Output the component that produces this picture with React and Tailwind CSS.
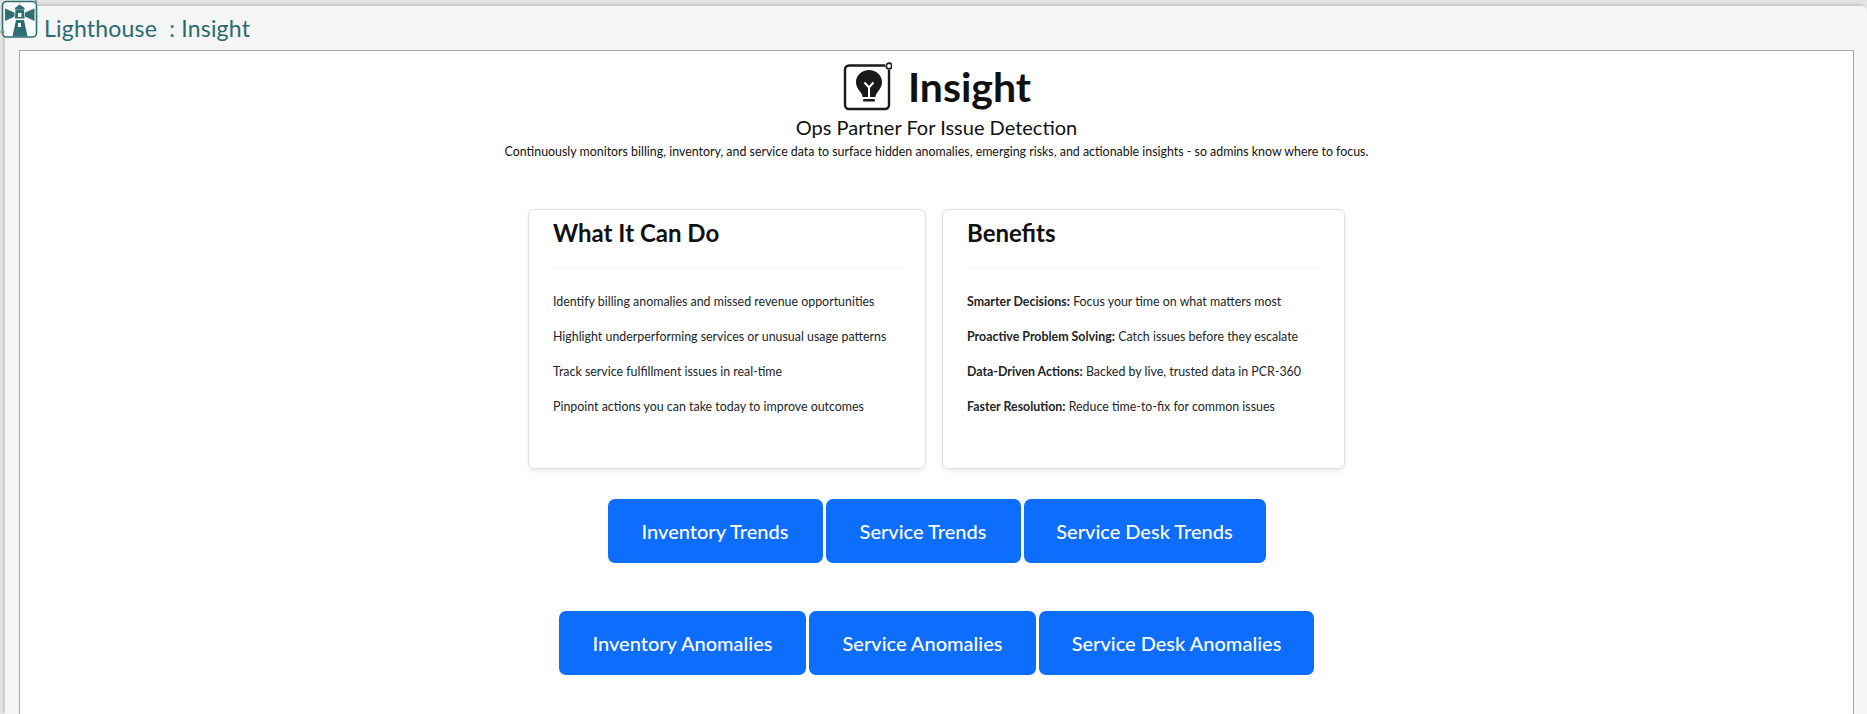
const rows = [
  'Identify billing anomalies and missed revenue opportunities',
  'Highlight underperforming services or unusual usage patterns',
  'Track service fulfillment issues in real-time',
  'Pinpoint actions you can take today to improve outcomes',
];

const benefits = [
  ['Smarter Decisions:', 'Focus your time on what matters most'],
  ['Proactive Problem Solving:', 'Catch issues before they escalate'],
  ['Data-Driven Actions:', 'Backed by live, trusted data in PCR-360'],
  ['Faster Resolution:', 'Reduce time-to-fix for common issues'],
];

function LighthouseLogo() {
  return (
    <div className="absolute left-[-5px] top-[-6px] h-[40px] w-[40px]">
      <svg width="40" height="40" viewBox="0 0 40 40">
        <rect x="2.500" y="1.500" width="34" height="35.500" rx="4" fill="#fafbfb" stroke="#2f6f73" strokeWidth="1.600" />
        <circle cx="35.500" cy="2" r="2" fill="#6f9a9c" />
        <circle cx="2.500" cy="32" r="2" fill="#6f9a9c" />
        <path d="M19.500 4.500l4.500 3 1 2H14.500l1-2z" fill="#2f6f73" />
        <path d="M15.500 9.500h8.500l.5 9h-9.500z" fill="#2f6f73" />
        <rect x="18" y="13" width="3.500" height="4" fill="#fafbfb" />
        <path d="M16 20h8l3.500 16.500h-15z" fill="#2f6f73" />
        <rect x="18" y="23" width="3" height="4" fill="#fafbfb" />
        <path d="M5 8.500l9.500 4v4L5 21zM34.500 8.500l-9.500 4v4l9.500 4.500z" fill="#2f6f73" />
      </svg>
    </div>
  );
}

function InsightIcon() {
  return (
    <svg width="50" height="50" viewBox="0 0 50 50" fill="none">
      <path d="M43 4.500H7a4 4 0 0 0-4 4V44a4 4 0 0 0 4 4h36a4 4 0 0 0 4-4V9" stroke="#1a1a1a" strokeWidth="2.400" />
      <circle cx="47" cy="5" r="2.800" stroke="#1a1a1a" strokeWidth="1.800" />
      <path d="M27 9c-7 0-13 5-13 12 0 5 3 8 5 11 1 1.500 1.500 2.500 1.500 4h13c0-1.500.5-2.500 1.500-4 2-3 5-6 5-11 0-7-6-12-13-12z" fill="#1a1a1a" />
      <path d="M22.500 21.500l4.500 5 4.500-5M27 26.500V36" stroke="#fff" strokeWidth="2" />
      <rect x="21" y="38" width="12" height="2.600" rx="1.200" fill="#1a1a1a" />
    </svg>
  );
}

function Card({ title, width, children }) {
  return (
    <div className={`h-[260px] rounded-md border border-[#dee2e6] bg-white px-6 shadow-[0_2px_4px_rgba(0,0,0,0.08)] ${width}`}>
      <h2 className="mt-[8px] text-[24px] font-bold leading-[30px] text-[#111]">{title}</h2>
      <hr className="mt-[20px] border-t border-[#f5f5f5]" />
      <div className="mt-[24px] flex flex-col gap-[17px] text-[12.400px] leading-[18px] text-[#212529]">{children}</div>
    </div>
  );
}

function BlueButton({ label, width }) {
  return (
    <button className={`h-[64px] rounded-[7px] bg-[#0d6efd] text-center text-[20px] font-medium text-white ${width}`}>
      {label}
    </button>
  );
}

export default function App() {
  return (
    <div className="h-[714px] w-[1867px] overflow-hidden bg-[#e4e4e4] pl-[5px] pt-[6px] font-['Lato',sans-serif]">
      <div className="relative h-[708px] rounded-tr-md bg-[#f5f5f5] pl-[14px] pr-[13px] shadow-[-2px_-2px_3px_rgba(0,0,0,0.12)]">
        <LighthouseLogo />
        <div className="flex h-[44px] items-center pl-[25px] text-[23px] tracking-[0.2px] text-[#2a6a72]">Lighthouse&nbsp; : Insight</div>
        <div className="h-[700px] border border-[#aaa] bg-white pt-[9px]">
          <div className="flex items-center justify-center gap-[16px]">
            <InsightIcon />
            <h1 className="pt-[2px] text-[41px] font-bold leading-[50px] text-[#111]">Insight</h1>
          </div>
          <p className="mt-[3px] text-center text-[20px] leading-[24px] text-[#111]">Ops Partner For Issue Detection</p>
          <p className="mt-[4px] text-center text-[12.400px] leading-[18px] text-[#111]">
            Continuously monitors billing, inventory, and service data to surface hidden anomalies, emerging risks, and actionable insights - so admins know where to focus.
          </p>
          <div className="mt-[48px] flex justify-center gap-[16px]">
            <Card title="What It Can Do" width="w-[398px]">
              {rows.map(r => <div key={r}>{r}</div>)}
            </Card>
            <Card title="Benefits" width="w-[403px]">
              {benefits.map(b => (
                <div key={b[0]}><b className="font-bold">{b[0]}</b> {b[1]}</div>
              ))}
            </Card>
          </div>
          <div className="mt-[30px] flex justify-center gap-[3px]">
            <BlueButton label="Inventory Trends" width="w-[215px]" />
            <BlueButton label="Service Trends" width="w-[195px]" />
            <BlueButton label="Service Desk Trends" width="w-[242px]" />
          </div>
          <div className="mt-[48px] flex justify-center gap-[3px]">
            <BlueButton label="Inventory Anomalies" width="w-[247px]" />
            <BlueButton label="Service Anomalies" width="w-[227px]" />
            <BlueButton label="Service Desk Anomalies" width="w-[275px]" />
          </div>
        </div>
      </div>
    </div>
  );
}
